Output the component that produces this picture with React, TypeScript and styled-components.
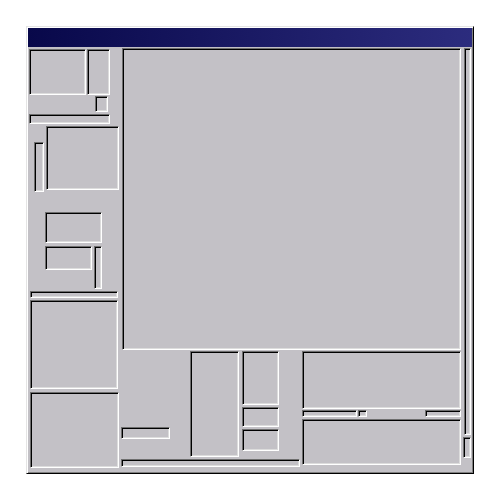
import React from 'react';
import styled, { createGlobalStyle } from 'styled-components';

const Global = createGlobalStyle`
  html, body {
    margin: 0;
    padding: 0;
    background: #ffffff;
    font-family: "Liberation Sans", Arial, sans-serif;
  }
  * {
    box-sizing: border-box;
  }
`;

const Window = styled.div`
  position: relative;
  margin: 26px 0 0 26px;
  width: 448px;
  height: 448px;
  background: #c3c1c6;
  border: 1px solid;
  border-color: #e4e4e4 #000000 #000000 #e4e4e4;
  box-shadow: inset 1px 1px #ffffff, inset -1px -1px #808080;
  padding: 1px;
  display: flex;
  flex-direction: column;
`;

const TitleBar = styled.div`
  height: 19px;
  flex: none;
  background: linear-gradient(to right, #08084a, #2c2c7e);
`;

const Body = styled.div`
  flex: 1;
  display: flex;
`;

const Column = styled.div<{ $w?: number }>`
  display: flex;
  flex-direction: column;
  align-items: flex-start;
  width: ${(p) => (p.$w ? `${p.$w}px` : 'auto')};
  flex: none;
`;

const Row = styled.div<{ $mt?: number }>`
  display: flex;
  align-items: flex-start;
  margin-top: ${(p) => p.$mt ?? 0}px;
`;

const Panel = styled.div<{ $w: number; $h: number; $ml?: number; $mt?: number }>`
  width: ${(p) => p.$w}px;
  height: ${(p) => p.$h}px;
  margin-left: ${(p) => p.$ml ?? 0}px;
  margin-top: ${(p) => p.$mt ?? 0}px;
  flex: none;
  background: #c3c1c6;
  border: 1px solid;
  border-color: #6e6e6e #ffffff #ffffff #6e6e6e;
  box-shadow: inset 1px 1px #000000, inset -1px -1px #dcdcdc;
`;

const App = () => {
  return (
    <>
      <Global />
      <Window>
        <TitleBar />
        <Body>
          <Column $w={93}>
            <Row $mt={2}>
              <Panel $w={57} $h={46} $ml={1} />
              <Panel $w={23} $h={46} $ml={1} />
            </Row>
            <Panel $w={13} $h={16} $ml={67} $mt={1} />
            <Panel $w={81} $h={10} $ml={1} $mt={2} />
            <Row $mt={2}>
              <Panel $w={10} $h={50} $ml={6} $mt={16} />
              <Panel $w={73} $h={64} $ml={2} />
            </Row>
            <Panel $w={57} $h={31} $ml={17} $mt={20} />
            <Row $mt={3}>
              <Panel $w={47} $h={24} $ml={17} />
              <Panel $w={8} $h={43} $ml={2} />
            </Row>
            <Panel $w={88} $h={7} $ml={2} $mt={2} />
            <Panel $w={88} $h={89} $ml={2} $mt={2} />
            <Panel $w={89} $h={76} $ml={2} $mt={3} />
          </Column>
          <Column $w={341}>
            <Panel $w={339} $h={302} $ml={1} $mt={1} />
            <Row $mt={1}>
              <Column $w={181}>
                <Row>
                  <Panel $w={49} $h={12} $mt={76} />
                  <Panel $w={49} $h={106} $ml={20} />
                  <Column>
                    <Panel $w={37} $h={54} $ml={3} />
                    <Panel $w={37} $h={20} $ml={3} $mt={2} />
                    <Panel $w={37} $h={22} $ml={3} $mt={2} />
                  </Column>
                </Row>
                <Panel $w={179} $h={8} $mt={2} />
              </Column>
              <Column>
                <Panel $w={159} $h={58} />
                <Row $mt={1}>
                  <Panel $w={55} $h={7} />
                  <Panel $w={9} $h={7} $ml={1} />
                  <Panel $w={36} $h={7} $ml={58} />
                </Row>
                <Panel $w={159} $h={46} $mt={2} />
              </Column>
            </Row>
          </Column>
          <Column>
            <Panel $w={7} $h={387} $ml={2} $mt={1} />
            <Panel $w={8} $h={21} $ml={1} $mt={2} />
          </Column>
        </Body>
      </Window>
    </>
  );
};

export default App;
